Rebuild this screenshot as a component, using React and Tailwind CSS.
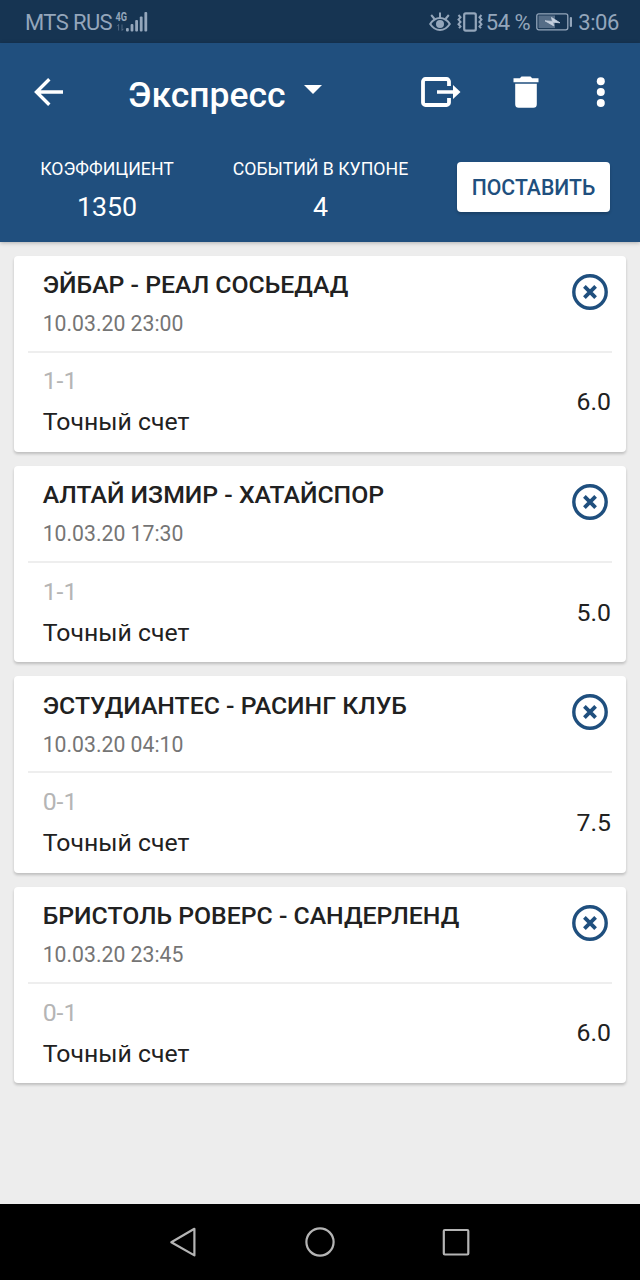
import { clsx } from "clsx";

const events = [
  { id: 1, title: "ЭЙБАР - РЕАЛ СОСЬЕДАД", date: "10.03.20 23:00", score: "1-1", odds: "6.0" },
  { id: 2, title: "АЛТАЙ ИЗМИР - ХАТАЙСПОР", date: "10.03.20 17:30", score: "1-1", odds: "5.0" },
  { id: 3, title: "ЭСТУДИАНТЕС - РАСИНГ КЛУБ", date: "10.03.20 04:10", score: "0-1", odds: "7.5" },
  { id: 4, title: "БРИСТОЛЬ РОВЕРС - САНДЕРЛЕНД", date: "10.03.20 23:45", score: "0-1", odds: "6.0" },
];

const SignalIcon = () => (
  <svg width="34" height="24" viewBox="0 0 34 24" fill="currentColor">
    <text x="0.5" y="11" fontSize="12" fontWeight="700" textLength="11.5" lengthAdjust="spacingAndGlyphs">
      4G
    </text>
    <path d="M3.600 14.500v6M2.200 16.200l1.400-1.700M7 14.500v6M8.400 18.800 7 20.500" stroke="currentColor" fill="none" opacity="0.45" />
    <rect x="11" y="18" width="2.800" height="3.400" rx="1" />
    <rect x="15.600" y="14" width="2.800" height="7.400" rx="1" />
    <rect x="20.200" y="10" width="2.800" height="11.400" rx="1" />
    <rect x="24.800" y="6.500" width="2.800" height="14.900" rx="1" />
    <rect x="29.400" y="2" width="2.800" height="19.400" rx="1" />
  </svg>
);

const EyeIcon = () => (
  <svg width="22" height="20" viewBox="0 0 22 20" fill="none" stroke="currentColor" strokeWidth="2">
    <path d="M1.200 12c2.600-4 6-6 9.800-6s7.200 2 9.800 6c-2.600 4-6 6-9.800 6s-7.200-2-9.800-6Z" />
    <circle cx="11" cy="12" r="4" fill="currentColor" stroke="none" />
    <path d="M11 6V.500M5.500 7 2.200 3M16.500 7l3.300-4" />
  </svg>
);

const VibrateIcon = () => (
  <svg width="26" height="20" viewBox="0 0 26 20" fill="none" stroke="currentColor" strokeWidth="2">
    <rect x="7.200" y="1.400" width="11.600" height="17.200" rx="1.5" strokeWidth="2.200" />
    <path d="m1.500 3 2 2.300-2 2.300 2 2.300-2 2.300 2 2.300-1.500 1.700M24.500 3l-2 2.300 2 2.300-2 2.300 2 2.300-2 2.300 1.500 1.700" />
  </svg>
);

const BatteryIcon = () => (
  <svg width="37" height="18" viewBox="0 0 37 18" fill="none">
    <rect x="0.800" y="0.800" width="31" height="16" rx="2" stroke="currentColor" strokeWidth="1.300" />
    <rect x="2.500" y="2.500" width="16.500" height="12.600" fill="currentColor" opacity="0.5" />
    <path d="m9 7.800 7.500.6L15.500 4.500l8.500 5.300-7.200-.6 1 3.700Z" fill="#c5d0de" stroke="#c5d0de" strokeWidth="0.800" />
    <rect x="33.800" y="4" width="2.200" height="10" rx="1" fill="currentColor" />
  </svg>
);

const StatusBar = () => (
  <div className="flex h-[42.5px] items-center bg-[#163452] pl-[25px] pr-[21px] pt-px text-[22px] leading-none text-[#94a6bb]">
    <span className="w-[90px] whitespace-nowrap pt-[3px] tracking-[-0.6px]">MTS RUS</span>
    <SignalIcon />
    <div className="ml-auto flex items-center">
      <EyeIcon />
      <span className="ml-1.5">
        <VibrateIcon />
      </span>
      <span className="ml-[3px] pt-[3px] tracking-[-0.5px]">54 %</span>
      <span className="ml-1.5">
        <BatteryIcon />
      </span>
      <span className="ml-[5px] pt-[3px] tracking-[-0.4px]">3:06</span>
    </div>
  </div>
);

const Toolbar = () => (
  <div className="flex h-[100px] items-center pb-px pl-8 pr-5">
    <button aria-label="Назад">
      <svg width="34" height="34" viewBox="0 0 34 34" fill="none" stroke="#fff" strokeWidth="3.400">
        <path d="M31 17H4.500M17.300 4.200 4.500 17l12.800 12.800" />
      </svg>
    </button>
    <button className="ml-[62px] flex items-center">
      <span className="pt-[5px] text-[35.5px] font-medium leading-10">Экспресс</span>
      <svg className="ml-[18px] -mt-1.5" width="18" height="9" viewBox="0 0 18 9" fill="#fff">
        <path d="M0 0h18L9 9Z" />
      </svg>
    </button>
    <div className="ml-auto flex items-center">
      <button aria-label="Поделиться">
        <svg width="42" height="34" viewBox="0 0 42 34">
          <path d="M29 11V6.500a2.500 2.500 0 0 0-2.500-2.500h-21A2.500 2.500 0 0 0 3 6.500v21A2.500 2.500 0 0 0 5.500 30h21a2.500 2.500 0 0 0 2.500-2.500V23" fill="none" stroke="#fff" strokeWidth="3.800" />
          <path d="M17 15.200h16V10l7.500 7-7.500 7v-5.200H17Z" fill="#fff" />
        </svg>
      </button>
      <button aria-label="Удалить" className="ml-[51px]">
        <svg width="26" height="34" viewBox="0 0 26 34" fill="#fff">
          <path d="M.500 3.300h6.300L8.500 1.500h9l1.700 1.800h6.300v4H.500ZM2.200 8.800h21.600v20.400a3.500 3.500 0 0 1-3.500 3.500H5.700a3.500 3.500 0 0 1-3.500-3.500Z" />
        </svg>
      </button>
      <button aria-label="Ещё" className="ml-[43px]">
        <svg width="38" height="34" viewBox="0 0 38 34" fill="#fff">
          <circle cx="18.800" cy="6.300" r="4" />
          <circle cx="18.800" cy="17" r="4" />
          <circle cx="18.800" cy="27.900" r="4" />
        </svg>
      </button>
    </div>
  </div>
);

const Stat = ({ label, value, className }) => (
  <div className={clsx("text-center", className)}>
    <div className="text-[17.7px] leading-8">{label}</div>
    <div className="text-[26.7px] leading-[45px]">{value}</div>
  </div>
);

const EventCard = ({ event }) => (
  <div className="h-[196.3px] rounded-[4px] bg-white shadow-[0_2px_3px_rgba(0,0,0,0.2)]">
    <div className="flex h-[95px] justify-between pl-[28.7px] pr-[18px] pt-[13.2px]">
      <div>
        <h2 className="text-[24.8px] font-medium leading-8 text-[#212121]">{event.title}</h2>
        <p className="text-[21.2px] leading-[45px] text-[#757575]">{event.date}</p>
      </div>
      <button aria-label="Удалить событие" className="mt-[4.8px] h-9">
        <svg width="36" height="36" viewBox="0 0 36 36" fill="none" stroke="#1f4f7e">
          <circle cx="18" cy="18" r="16.200" strokeWidth="3.400" />
          <path d="m12.400 12.400 11.200 11.200M23.600 12.400 12.400 23.600" strokeWidth="3.800" />
        </svg>
      </button>
    </div>
    <div className="mx-3.5 h-0.5 bg-[#eeeeee]" />
    <div className="flex h-[98.4px] items-center justify-between pl-[28.7px] pr-[15px] text-[24.8px] text-[#212121]">
      <div>
        <div className="leading-10 text-[#b5b5b5]">{event.score}</div>
        <div className="leading-[41px]">Точный счет</div>
      </div>
      <span>{event.odds}</span>
    </div>
  </div>
);

const NavBar = () => (
  <div className="flex h-19 items-center justify-between bg-black pl-[168px] pr-[169px]">
    <svg width="30" height="30" viewBox="0 0 30 30" fill="none" stroke="#b4b4b4" strokeWidth="2.200" strokeLinejoin="round">
      <path d="M26.400 1.800v26.600L3.300 15.200Z" />
    </svg>
    <svg width="30" height="30" viewBox="0 0 30 30" fill="none" stroke="#b4b4b4" strokeWidth="2.200">
      <circle cx="15" cy="15" r="13.600" />
    </svg>
    <svg width="30" height="30" viewBox="0 0 30 30" fill="none" stroke="#b4b4b4" strokeWidth="2.200">
      <rect x="2.800" y="3" width="24.500" height="24.500" rx="1" />
    </svg>
  </div>
);

const App = () => (
  <div className="flex h-[1280px] w-[640px] flex-col overflow-hidden bg-[#ededed] font-['Roboto',sans-serif]">
    <StatusBar />
    <header className="h-[199.5px] bg-[#204f7e] text-white shadow-[0_1px_4px_rgba(0,0,0,0.25)]">
      <Toolbar />
      <div className="flex pl-10">
        <div className="flex pt-[10.6px]">
          <Stat label="КОЭФФИЦИЕНТ" value="1350" className="w-[134px]" />
          <Stat label="СОБЫТИЙ В КУПОНЕ" value="4" className="ml-[58px] w-[177px]" />
        </div>
        <button className="ml-12 mt-[19px] h-[50px] w-[153px] rounded-[4px] bg-white pt-0.5 text-[21.2px] font-medium text-[#204f7e] shadow-[0_2px_3px_rgba(0,0,0,0.2)]">
          ПОСТАВИТЬ
        </button>
      </div>
    </header>
    <main className="flex flex-1 flex-col gap-[14.1px] px-3.5 pt-[13.7px]">
      {events.map((event) => (
        <EventCard key={event.id} event={event} />
      ))}
    </main>
    <NavBar />
  </div>
);

export default App;
